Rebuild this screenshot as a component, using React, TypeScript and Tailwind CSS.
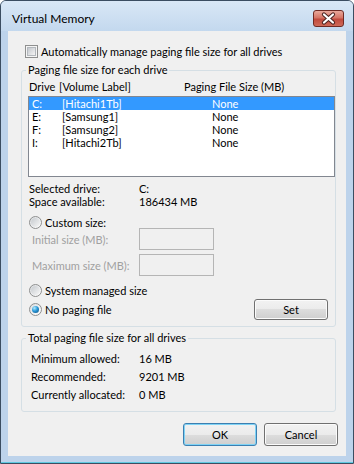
const btnClass =
  "h-full w-[74px] rounded-[3px] border text-black bg-[linear-gradient(to_bottom,#f2f2f2_0%,#ebebeb_50%,#dddddd_50%,#cfcfcf_100%)]";

function Checkbox() {
  return (
    <span className="flex h-[13px] w-[13px] shrink-0 items-center justify-center border border-[#8e8f8f] bg-[#f5f5f5]">
      <span className="h-[9px] w-[9px] border border-[#b3b8bd] bg-[linear-gradient(135deg,#c4c8ce,#f4f4f4)]" />
    </span>
  );
}

function Radio({ checked }: { checked?: boolean }) {
  return (
    <span className="flex h-[13px] w-[13px] shrink-0 items-center justify-center rounded-full border border-[#8e8f8f] bg-[linear-gradient(135deg,#dadde0,#ffffff)]">
      {checked ? (
        <span className="h-[7px] w-[7px] rounded-full bg-[radial-gradient(circle_at_35%_30%,#b4ecff_0%,#2a98d8_45%,#0a4a7a_100%)]" />
      ) : (
        <span className="h-[9px] w-[9px] rounded-full bg-[linear-gradient(135deg,#c6cacf,#f7f7f7)]" />
      )}
    </span>
  );
}

function GroupBox({
  title,
  className,
  children,
}: {
  title: string;
  className?: string;
  children: React.ReactNode;
}) {
  return (
    <fieldset
      className={`ml-[13px] w-[315px] rounded-[3px] border border-[#d5dfe5] pl-[6px] ${className ?? ""}`}
    >
      <legend className="-ml-[2px] px-[2px] leading-[14px]">{title}</legend>
      {children}
    </fieldset>
  );
}

const drives = [
  { drive: "C:", label: "[Hitachi1Tb]", size: "None" },
  { drive: "E:", label: "[Samsung1]", size: "None" },
  { drive: "F:", label: "[Samsung2]", size: "None" },
  { drive: "I:", label: "[Hitachi2Tb]", size: "None" },
];

export default function App() {
  const selected = 0;

  return (
    <div className="h-[464px] w-[354px] rounded-t-[6px] border border-[#3b4d61] bg-[#bdd3eb] font-[Lato,sans-serif] text-[11px] leading-[13px] text-black shadow-[inset_0_-1px_0_#5fc9e0]">
      {/* title bar */}
      <div className="flex h-[30px] rounded-t-[5px] bg-[linear-gradient(to_bottom,#d9e7f6,#c3d8ee)] pl-[11px] pr-[9px]">
        <span className="mt-[11px] text-[12px] leading-[14px]">Virtual Memory</span>
        <button className="ml-auto mt-[9px] h-[17px] w-[31px] rounded-[3px] border border-[#6f2a23] bg-[linear-gradient(to_bottom,#e9a99c_0%,#d57465_45%,#c14a3d_55%,#cf6a58_100%)]">
          <svg width="29" height="15" viewBox="0 0 29 15" className="block">
            <path d="M10 3.5 L19 11.5 M19 3.5 L10 11.5" stroke="#4b2320" strokeWidth="4.2" strokeLinecap="round" />
            <path d="M10 3.5 L19 11.5 M19 3.5 L10 11.5" stroke="#ffffff" strokeWidth="2.2" strokeLinecap="round" />
          </svg>
        </button>
      </div>

      {/* client area */}
      <div className="mx-[7px] h-[425px] bg-[#f0f0f0] pt-[14px]">
        <div className="flex h-[13px] items-center gap-[3px] pl-[17px]">
          <Checkbox />
          <span>Automatically manage paging file size for all drives</span>
        </div>

        <GroupBox title="Paging file size for each drive" className="mt-[5px] pb-[6px]">
          <div className="mt-[2px] flex h-[14px] items-center pl-[1px]">
            <span className="w-[30px]">Drive</span>
            <span className="w-[125px]">[Volume Label]</span>
            <span>Paging File Size (MB)</span>
          </div>

          <div className="mt-[3px] h-[81px] w-[307px] border border-[#828790] bg-white">
            {drives.map((d, i) => (
              <div
                key={d.drive}
                className={`flex h-[13px] items-center pl-[3px] ${
                  i === selected ? "bg-[#3399ff] text-white" : ""
                }`}
              >
                <span className="w-[30px]">{d.drive}</span>
                <span className="w-[150px]">{d.label}</span>
                <span>{d.size}</span>
              </div>
            ))}
          </div>

          <div className="mt-[5px] pl-[1px]">
            <div className="flex h-[13px] items-center">
              <span className="w-[110px]">Selected drive:</span>
              <span>C:</span>
            </div>
            <div className="flex h-[13px] items-center">
              <span className="w-[110px]">Space available:</span>
              <span>186434 MB</span>
            </div>
          </div>

          <div className="mt-[8px] flex h-[12px] items-center gap-[3px] pl-[1px]">
            <Radio />
            <span>Custom size:</span>
          </div>

          <div className="flex h-[22px] items-center pl-[4px] text-[#a0a0a0]">
            <span className="w-[107px]">Initial size (MB):</span>
            <span className="h-full w-[75px] border border-[#b5b5b5] bg-[#f0f0f0]" />
          </div>
          <div className="mt-[4px] flex h-[22px] items-center pl-[4px] text-[#a0a0a0]">
            <span className="w-[107px]">Maximum size (MB):</span>
            <span className="h-full w-[75px] border border-[#b5b5b5] bg-[#f0f0f0]" />
          </div>

          <div className="mt-[8px] flex h-[13px] items-center gap-[3px] pl-[1px]">
            <Radio />
            <span>System managed size</span>
          </div>

          <div className="mt-[2px] flex h-[21px] items-center gap-[3px] pl-[1px]">
            <Radio checked />
            <span>No paging file</span>
            <button
              className={`${btnClass} ml-auto mr-[7px] border-[#707070] shadow-[inset_0_0_0_1px_#fbfbfb]`}
            >
              Set
            </button>
          </div>
        </GroupBox>

        <GroupBox title="Total paging file size for all drives" className="mt-[4px] pb-[8px]">
          <div className="mt-[4px] pl-[3px]">
            {[
              ["Minimum allowed:", "16 MB"],
              ["Recommended:", "9201 MB"],
              ["Currently allocated:", "0 MB"],
            ].map(([k, v]) => (
              <div key={k} className="flex h-[18px] items-center">
                <span className="w-[108px]">{k}</span>
                <span>{v}</span>
              </div>
            ))}
          </div>
        </GroupBox>

        <div className="mt-[11px] flex h-[23px] justify-end gap-[7px] pr-[8px]">
          <button
            className={`${btnClass} border-[#3c7fb1] shadow-[inset_0_0_0_1px_#7fd3f5]`}
          >
            OK
          </button>
          <button
            className={`${btnClass} border-[#707070] shadow-[inset_0_0_0_1px_#fbfbfb]`}
          >
            Cancel
          </button>
        </div>
      </div>
    </div>
  );
}
